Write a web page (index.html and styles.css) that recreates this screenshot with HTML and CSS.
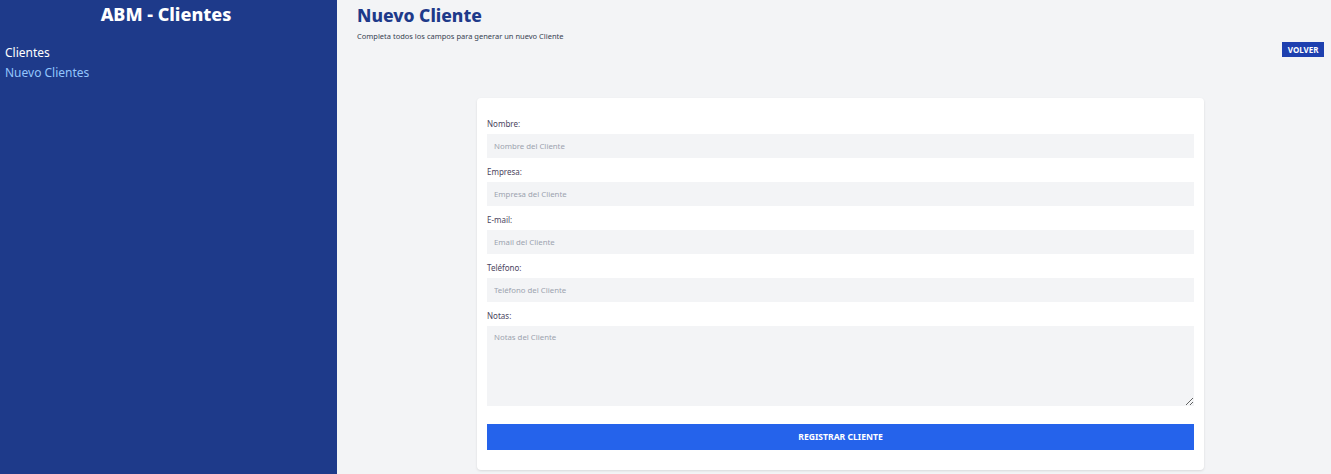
FILE: index.html
```html
<!DOCTYPE html>
<html lang="es">
<head>
<meta charset="utf-8">
<title>ABM - Clientes</title>
<link rel="stylesheet" href="styles.css">
</head>
<body>
<div class="layout">
  <aside class="sidebar">
    <h1 class="brand">ABM - Clientes</h1>
    <nav class="nav">
      <a class="nav-link" href="#">Clientes</a>
      <a class="nav-link nav-link-active" href="#">Nuevo Clientes</a>
    </nav>
  </aside>
  <main class="main">
    <h2 class="page-title">Nuevo Cliente</h2>
    <p class="page-subtitle">Completa todos los campos para generar un nuevo Cliente</p>
    <div class="toolbar">
      <a class="btn-back" href="#">VOLVER</a>
    </div>
    <form class="card">
      <div class="field">
        <label class="label" for="nombre">Nombre:</label>
        <input class="input" id="nombre" type="text" placeholder="Nombre del Cliente">
      </div>
      <div class="field">
        <label class="label" for="empresa">Empresa:</label>
        <input class="input" id="empresa" type="text" placeholder="Empresa del Cliente">
      </div>
      <div class="field">
        <label class="label" for="email">E-mail:</label>
        <input class="input" id="email" type="email" placeholder="Email del Cliente">
      </div>
      <div class="field">
        <label class="label" for="telefono">Teléfono:</label>
        <input class="input" id="telefono" type="tel" placeholder="Teléfono del Cliente">
      </div>
      <div class="field">
        <label class="label" for="notas">Notas:</label>
        <textarea class="input textarea" id="notas" placeholder="Notas del Cliente"></textarea>
      </div>
      <button class="btn-submit" type="button">REGISTRAR CLIENTE</button>
    </form>
  </main>
</div>
</body>
</html>
```

FILE: styles.css
```css
* { box-sizing: border-box; }
html, body { margin: 0; padding: 0; }
body {
  font-family: "Noto Sans", "Open Sans", "Liberation Sans", sans-serif;
  background: #f3f4f6;
  color: #374151;
}
.layout {
  display: flex;
  min-height: 474px;
}
.sidebar {
  width: 337px;
  flex-shrink: 0;
  background: #1e3a8a;
  padding: 1px 10px 0 5px;
}
.brand {
  margin: 0;
  font-size: 18px;
  line-height: 27px;
  font-weight: 800;
  color: #ffffff;
  text-align: center;
}
.nav {
  display: flex;
  flex-direction: column;
  margin-top: 15px;
}
.nav-link {
  font-size: 12px;
  line-height: 20px;
  color: #ffffff;
  text-decoration: none;
}
.nav-link-active { color: #93c5fd; }
.main {
  flex: 1;
  padding: 2px 7px 0 20px;
  display: flex;
  flex-direction: column;
}
.page-title {
  margin: 0;
  font-size: 17.5px;
  line-height: 27px;
  font-weight: 800;
  color: #1e3a8a;
}
.page-subtitle {
  margin: 0;
  font-size: 7.5px;
  line-height: 14px;
  color: #374151;
}
.toolbar {
  display: flex;
  justify-content: flex-end;
  margin-top: -1px;
}
.btn-back {
  display: inline-block;
  background: #1e40af;
  color: #fff;
  font-size: 8px;
  font-weight: 700;
  line-height: 15px;
  padding: 0 5.5px;
  text-decoration: none;
}
.card {
  align-self: center;
  width: 727px;
  margin-top: 41px;
  background: #fff;
  border-radius: 4px;
  box-shadow: 0 1px 3px rgba(0,0,0,0.08), 0 1px 2px rgba(0,0,0,0.04);
  padding: 19px 10px 20px;
  display: flex;
  flex-direction: column;
}
.field { display: flex; flex-direction: column; }
.field + .field { margin-top: 7px; }
.label {
  font-size: 8px;
  line-height: 14px;
  margin-bottom: 3px;
  color: #4b4560;
}
.input {
  width: 100%;
  height: 24px;
  border: 0;
  outline: none;
  background: #f3f4f6;
  padding: 0 7px;
  font-family: inherit;
  font-size: 7.8px;
  color: #374151;
}
.input::placeholder { color: #9ca3af; }
.textarea {
  height: 80px;
  padding: 6px 7px;
  resize: vertical;
  display: block;
}
.btn-submit {
  margin-top: 18px;
  height: 26px;
  border: 0;
  background: #2563eb;
  color: #fff;
  font-family: inherit;
  font-size: 8.6px;
  font-weight: 700;
  cursor: pointer;
}
```
